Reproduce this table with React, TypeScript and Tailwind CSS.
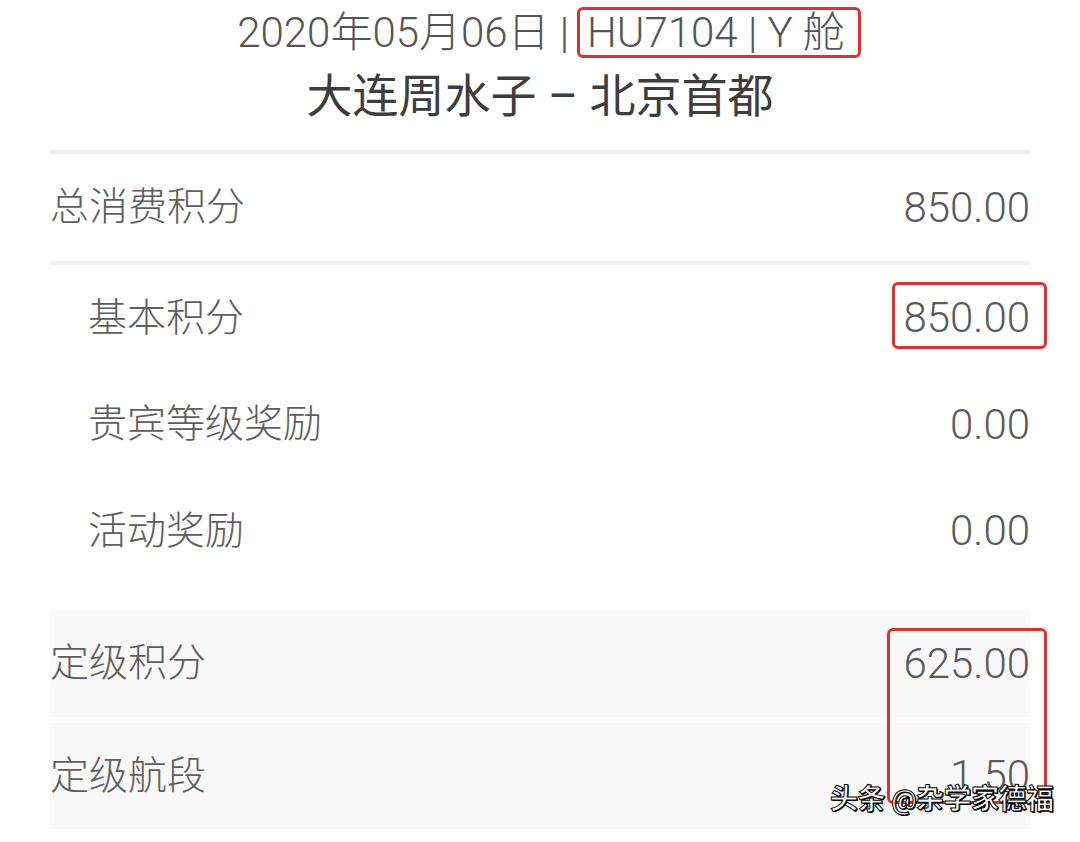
import React from "react";

const FONT = "font-['Roboto','Noto_Sans_CJK_SC',sans-serif]";

function Row({
  label,
  value,
  indent,
  h,
  boxed,
}: {
  label: string;
  value: string;
  indent?: boolean;
  h: string;
  boxed?: boolean;
}) {
  return (
    <div className={`flex items-center justify-between ${h} ${indent ? "pl-[38px]" : ""}`}>
      <span className="text-[39px] text-[#5e5e5e] font-light leading-none">{label}</span>
      <span className="relative text-[42px] text-[#5a5a5a] font-light leading-none">
        {value}
        {boxed && (
          <span className="absolute left-[-11px] right-[-17px] top-[-15px] bottom-[-10px] border-[3px] border-[#e2302a] rounded-[6px]" />
        )}
      </span>
    </div>
  );
}

export default function App() {
  return (
    <div className={`relative w-[1080px] h-[842px] bg-white overflow-hidden ${FONT}`}>
      <div className="flex flex-col items-center">
        <div className="mt-[12px] h-[42px] flex items-center text-[42px] text-[#555] font-light leading-none pl-[2px]">
          <span>2020年05月06日 |</span>
          <span className="relative ml-[18px]">
            HU7104 | Y 舱
            <span className="absolute left-[-10px] right-[-16px] top-[-5px] bottom-[-4px] border-[3px] border-[#e2302a] rounded-[6px]" />
          </span>
        </div>
        <div className="mt-[14px] h-[56px] flex items-center text-[46px] text-[#3d3d3d] leading-none">
          大连周水子 – 北京首都
        </div>
      </div>

      <div className="mx-[50px] mt-[26px]">
        <div className="h-[4px] bg-[#efefef]" />
        <Row label="总消费积分" value="850.00" h="h-[107px]" />
        <div className="h-[4px] bg-[#efefef]" />
        <Row label="基本积分" value="850.00" h="h-[106px]" indent boxed />
        <Row label="贵宾等级奖励" value="0.00" h="h-[107px]" indent />
        <Row label="活动奖励" value="0.00" h="h-[106px]" indent />

        <div className="relative mt-[26px] flex flex-col gap-[6px]">
          <div className="h-[107px] bg-[#f9f9fa] flex items-center justify-between">
            <span className="text-[39px] text-[#5e5e5e] font-light leading-none">定级积分</span>
            <span className="text-[42px] text-[#5a5a5a] font-light leading-none">625.00</span>
          </div>
          <div className="h-[106px] bg-[#f9f9fa] flex items-center justify-between">
            <span className="text-[39px] text-[#5e5e5e] font-light leading-none">定级航段</span>
            <span className="text-[42px] text-[#5a5a5a] font-light leading-none">1.50</span>
          </div>
          <div className="absolute left-[837px] w-[160px] top-[18px] h-[176px] border-[3px] border-[#e2302a] rounded-[6px]" />
        </div>
      </div>

      <div
        className="absolute left-[830px] top-[786px] text-[28px] text-white font-bold leading-none tracking-[-0.5px]"
        style={{ WebkitTextStroke: "1px #000", textShadow: "1px 1px 0 #000" }}
      >
        头条 @杂学家德福
      </div>
    </div>
  );
}
